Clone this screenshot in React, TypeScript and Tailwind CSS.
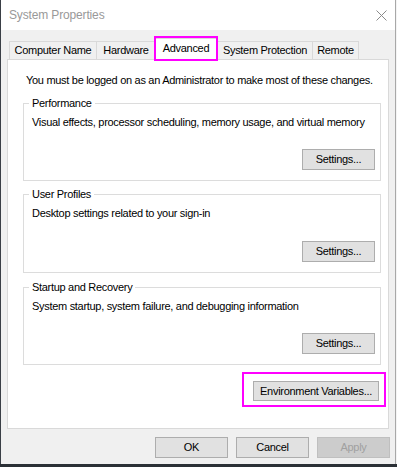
import React from "react";

function Btn({
  children,
  className = "",
  disabled = false,
  overlay = false,
}: {
  children: React.ReactNode;
  className?: string;
  disabled?: boolean;
  overlay?: boolean;
}) {
  return (
    <div
      className={`relative flex items-center justify-center border ${
        disabled
          ? "border-[#bfbfbf] bg-[#cccccc] text-[#a0a0a0]"
          : "border-[#adadad] bg-[#e1e1e1] text-black"
      } ${className}`}
    >
      {children}
      {overlay && (
        <div className="pointer-events-none absolute left-[-12px] right-[-8px] top-[-10px] bottom-[-7px] border-2 border-[#ff00ff]" />
      )}
    </div>
  );
}

function Group({
  title,
  desc,
  className = "",
}: {
  title: string;
  desc: string;
  className?: string;
}) {
  return (
    <div className={`relative flex flex-col border border-[#dcdcdc] ${className}`}>
      <span className="absolute left-[5px] top-[-8px] bg-white px-[3px] leading-[15px]">
        {title}
      </span>
      <div className="pl-[8px] pt-[11px] leading-[15px]">{desc}</div>
      <div className="mt-auto mb-[10px] flex justify-end pr-[5px]">
        <Btn className="h-[21px] w-[73px]">Settings...</Btn>
      </div>
    </div>
  );
}

function Tab({
  label,
  w,
  last = false,
}: {
  label: string;
  w: string;
  last?: boolean;
}) {
  return (
    <div
      className={`flex h-[18px] items-center justify-center border-l border-t border-[#d9d9d9] bg-[#f0f0f0] ${
        last ? "border-r" : ""
      } ${w}`}
    >
      {label}
    </div>
  );
}

export default function App() {
  return (
    <div className="flex h-[467px] w-[397px] flex-col overflow-hidden bg-[#2b3036] font-['Liberation_Sans',Arial,sans-serif] text-[11px] tracking-[-0.3px] text-black">
      <div className="flex h-[464px]">
        <div className="w-[1px] bg-[#3a3f46]" />
        <div className="flex w-[395px] flex-col border-r border-[#a8a8a8] bg-[#f0f0f0]">
          {/* Title bar */}
          <div className="flex h-[30px] items-center justify-between bg-white pl-[8px] pr-[8px]">
            <span className="text-[12px] tracking-[-0.15px] text-[#999999]">System Properties</span>
            <svg width="11" height="11" viewBox="0 0 11 11" className="mt-[1px]">
              <path d="M0.5 0.5 L10.5 10.5 M10.5 0.5 L0.5 10.5" stroke="#8a8a8a" strokeWidth="1" fill="none" />
            </svg>
          </div>

          {/* Tabs */}
          <div className="mt-[8px] flex h-[21px] items-end pl-[8px]">
            <Tab label="Computer Name" w="w-[87px]" />
            <Tab label="Hardware" w="w-[59px]" />
            <div className="relative z-10 mb-[-1px] flex h-[22px] w-[62px] items-center justify-center border-l border-r border-t border-[#d9d9d9] bg-white pb-[2px]">
              Advanced
              <div className="pointer-events-none absolute left-[-2px] right-[-2px] top-[-3px] bottom-[-1px] border-2 border-[#ff00ff]" />
            </div>
            <Tab label="System Protection" w="w-[95px]" />
            <Tab label="Remote" w="w-[47px]" last />
          </div>

          {/* Panel */}
          <div className="ml-[6px] flex h-[370px] w-[382px] flex-col border border-[#d9d9d9] bg-white">
            <div className="pl-[18px] pt-[13px] leading-[15px]">
              You must be logged on as an Administrator to make most of these changes.
            </div>
            <Group
              className="ml-[15px] mt-[15px] h-[78px] w-[358px]"
              title="Performance"
              desc="Visual effects, processor scheduling, memory usage, and virtual memory"
            />
            <Group
              className="ml-[15px] mt-[13px] h-[79px] w-[358px]"
              title="User Profiles"
              desc="Desktop settings related to your sign-in"
            />
            <Group
              className="ml-[15px] mt-[14px] h-[78px] w-[358px]"
              title="Startup and Recovery"
              desc="System startup, system failure, and debugging information"
            />
            <div className="mt-[16px] flex justify-end pr-[9px]">
              <Btn className="h-[20px] w-[126px]" overlay>
                Environment Variables...
              </Btn>
            </div>
          </div>

          {/* Bottom buttons */}
          <div className="mt-[8px] flex justify-end gap-[8px] pr-[5px]">
            <Btn className="h-[21px] w-[73px]">OK</Btn>
            <Btn className="h-[21px] w-[73px]">Cancel</Btn>
            <Btn className="h-[21px] w-[73px]" disabled>
              Apply
            </Btn>
          </div>
        </div>
        <div className="w-[1px] bg-[#f4f4f4]" />
      </div>
    </div>
  );
}
